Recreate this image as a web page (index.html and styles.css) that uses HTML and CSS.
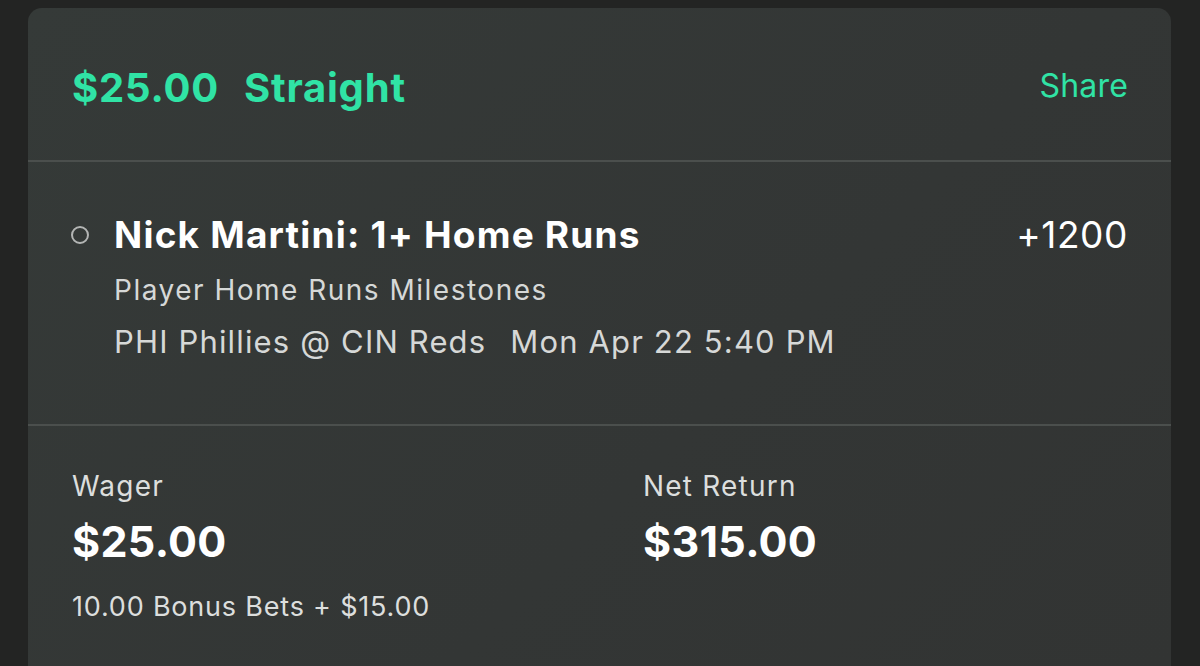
FILE: index.html
```html
<!DOCTYPE html>
<html>
<head>
<meta charset="utf-8">
<link rel="stylesheet" href="styles.css">
</head>
<body>
<div class="card">
  <div class="header">
    <div class="title"><span>$25.00</span><span>Straight</span></div>
    <div class="share">Share</div>
  </div>
  <div class="divider"></div>
  <div class="leg">
    <div class="leg-row">
      <span class="dot"></span>
      <span class="leg-name">Nick Martini: 1+ Home Runs</span>
      <span class="odds">+1200</span>
    </div>
    <div class="leg-sub market">Player Home Runs Milestones</div>
    <div class="leg-sub game"><span>PHI Phillies @ CIN Reds</span><span>Mon Apr 22 5:40 PM</span></div>
  </div>
  <div class="divider"></div>
  <div class="totals">
    <div class="col">
      <div class="label">Wager</div>
      <div class="amount">$25.00</div>
      <div class="note">10.00 Bonus Bets + $15.00</div>
    </div>
    <div class="col">
      <div class="label">Net Return</div>
      <div class="amount">$315.00</div>
    </div>
  </div>
</div>
</body>
</html>
```

FILE: styles.css
```css
html, body {
  margin: 0;
  padding: 0;
  background: #232423;
  height: 666px;
  overflow: hidden;
}
body {
  font-family: Inter, "Noto Sans", sans-serif;
  padding: 8px 29px 0 28px;
}
.card {
  background: linear-gradient(135deg, #353a38 0%, #333635 60%, #323433 100%);
  border-radius: 14px 14px 0 0;
  height: 658px;
  overflow: hidden;
}
.header {
  height: 152px;
  display: flex;
  align-items: center;
  justify-content: space-between;
  padding: 0 43px 0 44px;
  color: #30e3a5;
}
.title {
  display: flex;
  gap: 25px;
  font-weight: 700;
  font-size: 40px;
  letter-spacing: 0.8px;
  margin-top: 6px;
}
.share {
  font-size: 32px;
  font-weight: 400;
  letter-spacing: 0.2px;
  margin-top: 2px;
}
.divider {
  height: 2px;
  background: #4b4f4d;
}
.leg {
  height: 262px;
  box-sizing: border-box;
  padding: 50px 43px 0 43px;
}
.leg-row {
  display: flex;
  align-items: center;
  height: 44px;
}
.dot {
  width: 18px;
  height: 18px;
  border: 2.7px solid #b3b5b4;
  border-radius: 50%;
  margin-right: 25px;
  margin-top: 1px;
  box-sizing: border-box;
  flex-shrink: 0;
}
.leg-name {
  flex: 1;
  color: #fff;
  font-weight: 700;
  font-size: 37px;
  letter-spacing: 1.2px;
}
.odds {
  color: #fff;
  font-size: 37px;
  font-weight: 400;
  letter-spacing: 0.6px;
}
.leg-sub {
  color: #d6d8d7;
  padding-left: 43px;
}
.leg-sub.market {
  font-size: 28px;
  letter-spacing: 1.5px;
  height: 36px;
  line-height: 36px;
  margin-top: 16px;
}
.leg-sub.game {
  display: flex;
  gap: 24px;
  font-size: 31px;
  letter-spacing: 1.15px;
  height: 52px;
  line-height: 52px;
  margin-top: 8px;
}
.totals {
  display: flex;
  padding: 40px 44px 0 44px;
}
.col {
  width: 571px;
  flex-shrink: 0;
}
.col + .col {
  flex: 1;
  width: auto;
}
.label {
  color: #dcdedd;
  font-size: 28px;
  letter-spacing: 1.2px;
  height: 40px;
  line-height: 40px;
}
.amount {
  color: #fff;
  font-weight: 700;
  font-size: 43px;
  letter-spacing: 0.3px;
  height: 70px;
  line-height: 70px;
}
.note {
  color: #dcdedd;
  font-size: 27px;
  letter-spacing: 0.8px;
  height: 50px;
  line-height: 50px;
  margin-top: 6px;
}
```
